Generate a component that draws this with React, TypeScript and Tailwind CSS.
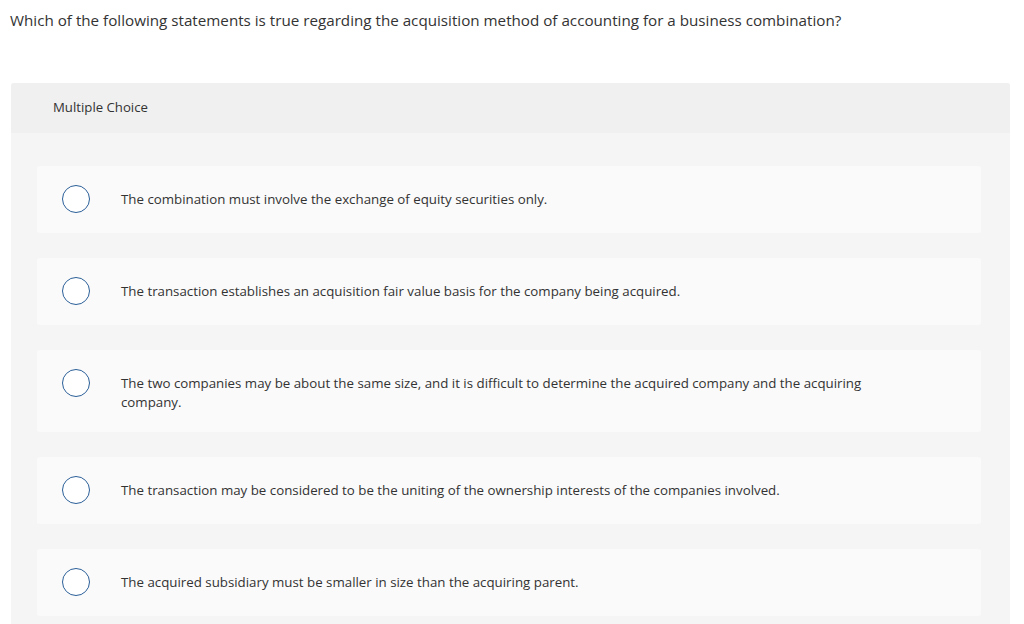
import React from 'react';

const options = [
  'The combination must involve the exchange of equity securities only.',
  'The transaction establishes an acquisition fair value basis for the company being acquired.',
  'The two companies may be about the same size, and it is difficult to determine the acquired company and the acquiring company.',
  'The transaction may be considered to be the uniting of the ownership interests of the companies involved.',
  'The acquired subsidiary must be smaller in size than the acquiring parent.',
];

export default function App() {
  return (
    <div className="min-h-screen bg-white text-[#333] font-['Open_Sans','Liberation_Sans',sans-serif]">
      <div className="pl-[10px] pt-[10px] text-[15.2px] leading-[20px]">
        Which of the following statements is true regarding the acquisition method of accounting for a business combination?
      </div>

      <div className="ml-[11px] mr-[14px] mt-[53px] rounded-t-[3px] bg-[#f5f5f5]">
        {/* Header */}
        <div className="h-[50px] flex items-center pl-[42px] bg-[#f0f0f0] rounded-t-[3px] text-[13.2px]">
          Multiple Choice
        </div>

        {/* Options */}
        <div className="pt-[33px] pl-[26px] pr-[29px] pb-[30px] flex flex-col gap-[25px]">
          {options.map((text) => (
            <div
              key={text}
              className="flex items-start bg-[#fafafa] rounded-[3px] pt-[19px] pb-[20px] pl-[25px] pr-[110px]"
            >
              <span className="shrink-0 w-[28px] h-[28px] rounded-full border-[1.5px] border-[#2b5f98] bg-white" />
              <p className="ml-[31px] pt-[5px] text-[13.3px] leading-[19px]">{text}</p>
            </div>
          ))}
        </div>
      </div>
    </div>
  );
}
